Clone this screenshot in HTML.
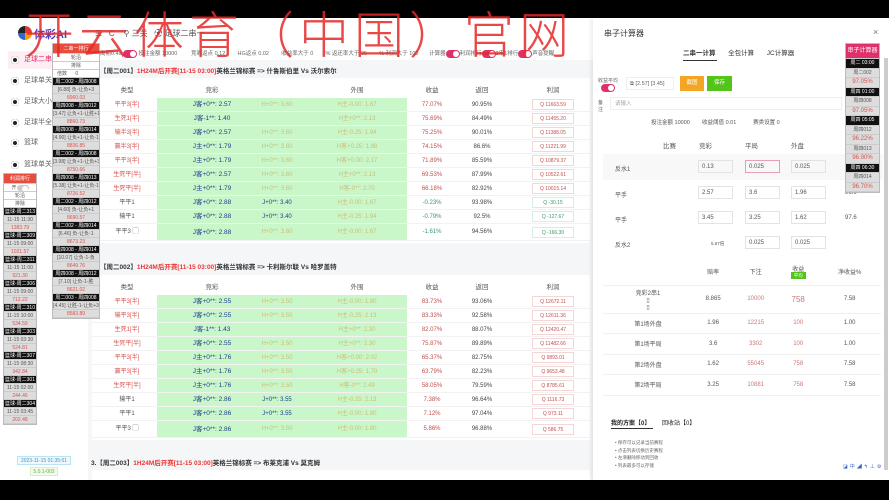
<!DOCTYPE html>
<html><head><meta charset="utf-8"><style>
*{box-sizing:border-box;margin:0;padding:0}
body{width:889px;height:500px;overflow:hidden;position:relative;background:#fff;font-family:"Liberation Sans","Noto Sans CJK SC",sans-serif;font-size:6px;color:#555}
.a{position:absolute}
.blk{background:#000}
.wm{position:absolute;left:24px;top:-4px;font-size:50px;color:rgba(228,40,40,.85);font-family:"Noto Sans CJK SC",sans-serif;font-weight:300;letter-spacing:5px;white-space:nowrap;z-index:50}
.menu div{position:absolute;left:8px;width:80px;height:18px;line-height:18px;padding-left:16px;font-size:7px;color:#666}
.menu div:before{content:"";position:absolute;left:3px;top:5px;width:8px;height:8px;border-radius:50%;background:#222;box-shadow:inset 0 0 0 2px #fff,inset 0 0 0 3px #222}
.tbl{position:absolute;left:92px;width:498px;background:#fff}
.row{position:absolute;left:0;width:498px;height:14px;line-height:14px;border-bottom:1px solid #f2f2f2}
.row span{position:absolute;text-align:center;white-space:nowrap}
.c1{left:10px;width:50px;color:#d9534f}
.c2{left:65px;width:110px;color:#1f3f8f;font-size:6.5px}
.c3{left:140px;width:90px;color:#c9c07a}
.c4{left:210px;width:110px;color:#c9c07a}
.c5{left:315px;width:50px;color:#c0504d}
.c6{left:365px;width:50px;color:#444}
.c7{left:440px;width:42px;border:1px solid #f3d6d6;height:11px;line-height:10px;top:1px;color:#c0504d;font-size:5px}
.grn{position:absolute;left:65px;width:250px;background:#c9f7c9}
.hd span{position:absolute;text-align:center;color:#555;font-size:6.5px}
.p1 div,.p2 div{height:8px;line-height:8px;text-align:center;font-size:5px;border-bottom:1px solid #ccc;white-space:nowrap;overflow:hidden}
.pk div{height:9.5px;line-height:9.5px}
.bk{background:#111;color:#fff}
.gy{background:#ddd;color:#555}
.rd{background:#ddd;color:#d9534f}
.tog{display:inline-block;width:14px;height:8px;border-radius:4px;background:#e0306a;position:relative;vertical-align:middle}
.tog:after{content:"";position:absolute;right:1px;top:1px;width:6px;height:6px;border-radius:50%;background:#fff}
.m td{border-bottom:1px solid #f0f0f0;text-align:center;color:#555;font-size:6px}
.inp{display:inline-block;border:1px solid #e3e3e3;height:13px;line-height:12px;padding-left:3px;text-align:left}
</style></head><body>
<div class="a blk" style="left:0;top:0;width:889px;height:18px"></div>
<div class="a blk" style="left:0;top:480px;width:889px;height:20px;z-index:60"></div>
<div class="wm">开云体育（中国）官网</div>

<div class="a" style="left:18px;top:26px;width:14px;height:14px;border-radius:50%;background:conic-gradient(#e33 0 25%,#f90 0 50%,#36c 0 75%,#222 0)"></div>
<div class="a" style="left:34px;top:26px;font-size:11px;font-weight:bold;color:#4a3cc9">体彩AI</div>
<div class="a" style="left:95px;top:28px;font-size:8px;color:#555">☰ &nbsp;&nbsp;C &nbsp;&nbsp;&nbsp;⚲ 三关 &nbsp; ⚽ 足球二串一</div>

<div class="menu">
<div style="top:51px;background:#fdeef3;color:#e0306a">足球二串一</div>
<div style="top:72px">足球单关</div>
<div style="top:93px">足球大小</div>
<div style="top:114px">足球半全场</div>
<div style="top:134px">篮球</div>
<div style="top:156px">篮球单关</div>
</div>

<div class="a" style="left:100px;top:49px;width:490px;font-size:5.5px;color:#666;white-space:nowrap">离期0.4s <span class="tog"></span> 投注金额 10000 &nbsp;&nbsp;&nbsp;&nbsp;&nbsp;&nbsp;&nbsp;&nbsp;竞彩返点 0.12 &nbsp;&nbsp;&nbsp;&nbsp;&nbsp;&nbsp;&nbsp;HG返点 0.02 &nbsp;&nbsp;&nbsp;&nbsp;&nbsp;&nbsp;&nbsp;收益率大于 0 &nbsp;&nbsp;&nbsp;&nbsp;&nbsp;&nbsp;&nbsp;% 返还率大于 95 &nbsp;&nbsp;&nbsp;&nbsp;&nbsp;&nbsp;&nbsp;% 利润大于 100 &nbsp;&nbsp;&nbsp;&nbsp;&nbsp;&nbsp;计算器<span class="tog"></span>利润排行<span class="tog"></span>2串1排行<span class="tog"></span>声音提醒</div>

<div class="a" style="left:88px;top:60px;width:505px;height:420px;background:#f5f6f8"></div>

<div class="a" style="left:100px;top:65px;font-size:6.5px;color:#333;font-weight:bold;white-space:nowrap">【周二001】<span style="color:#e33">1H24M后开赛[11-15 03:00]</span>英格兰锦标赛 =&gt; 什鲁斯伯里 Vs 沃尔索尔</div>
<div class="tbl" style="top:78px;height:165px">
<div class="hd" style="position:absolute;top:6px;width:100%"><span style="left:10px;width:50px">类型</span><span style="left:65px;width:110px">竞彩</span><span style="left:210px;width:110px">外围</span><span style="left:315px;width:50px">收益</span><span style="left:365px;width:50px">返回</span><span style="left:440px;width:42px">利润</span></div>
<div class="grn" style="top:20px;height:143px"></div>
<div class="row" style="top:20px"><span class="c1">平平3[半]</span><span class="c2">J客+0**: 2.57</span><span class="c3">H+0**: 3.60</span><span class="c4">H主-0.00: 1.67</span><span class="c5">77.07%</span><span class="c6">90.95%</span><span class="c7">Q 11663.59</span></div>
<div class="row" style="top:34px"><span class="c1">生死1[半]</span><span class="c2">J客-1**: 1.40</span><span class="c4">H主+0**: 2.13</span><span class="c5">75.69%</span><span class="c6">84.49%</span><span class="c7">Q 11455.20</span></div>
<div class="row" style="top:48px"><span class="c1">输半3[半]</span><span class="c2">J客+0**: 2.57</span><span class="c3">H+0**: 3.60</span><span class="c4">H主-0.25: 1.94</span><span class="c5">75.25%</span><span class="c6">90.01%</span><span class="c7">Q 11388.05</span></div>
<div class="row" style="top:62px"><span class="c1">赢半3[半]</span><span class="c2">J主+0**: 1.79</span><span class="c3">H+0**: 3.60</span><span class="c4">H客+0.25: 1.88</span><span class="c5">74.15%</span><span class="c6">86.6%</span><span class="c7">Q 11221.99</span></div>
<div class="row" style="top:76px"><span class="c1">平平3[半]</span><span class="c2">J主+0**: 1.79</span><span class="c3">H+0**: 3.60</span><span class="c4">H客+0.00: 2.17</span><span class="c5">71.89%</span><span class="c6">85.59%</span><span class="c7">Q 10879.37</span></div>
<div class="row" style="top:90px"><span class="c1">生死平[半]</span><span class="c2">J客+0**: 2.57</span><span class="c3">H+0**: 3.60</span><span class="c4">H主+0**: 2.13</span><span class="c5">69.53%</span><span class="c6">87.99%</span><span class="c7">Q 10522.61</span></div>
<div class="row" style="top:104px"><span class="c1">生死平[半]</span><span class="c2">J主+0**: 1.79</span><span class="c3">H+0**: 3.60</span><span class="c4">H客-0**: 2.70</span><span class="c5">66.18%</span><span class="c6">82.92%</span><span class="c7">Q 10015.14</span></div>
<div class="row" style="top:118px"><span class="c1" style="color:#555">平平1</span><span class="c2">J客+0**: 2.88</span><span class="c3" style="color:#1f3f8f">J+0**: 3.40</span><span class="c4">H主-0.00: 1.67</span><span class="c5" style="color:#3a9a6a">-0.23%</span><span class="c6">93.98%</span><span class="c7" style="color:#3a9a6a;border-color:#d6eedd">Q -30.15</span></div>
<div class="row" style="top:132px"><span class="c1" style="color:#555">输平1</span><span class="c2">J客+0**: 2.88</span><span class="c3" style="color:#1f3f8f">J+0**: 3.40</span><span class="c4">H主-0.25: 1.94</span><span class="c5" style="color:#3a9a6a">-0.79%</span><span class="c6">92.5%</span><span class="c7" style="color:#3a9a6a;border-color:#d6eedd">Q -127.67</span></div>
<div class="row" style="top:146px;height:17px;line-height:17px"><span class="c1" style="color:#555">平平3 ▢</span><span class="c2">J客+0**: 2.88</span><span class="c3">H+0**: 3.60</span><span class="c4">H主-0.00: 1.67</span><span class="c5" style="color:#3a9a6a">-1.61%</span><span class="c6">94.56%</span><span class="c7" style="color:#3a9a6a;border-color:#d6eedd;top:3px">Q -166.30</span></div>
</div>

<div class="a" style="left:100px;top:261px;font-size:6.5px;color:#333;font-weight:bold;white-space:nowrap">【周二002】<span style="color:#e33">1H24M后开赛[11-15 03:00]</span>英格兰锦标赛 =&gt; 卡利斯尔联 Vs 哈罗盖特</div>
<div class="tbl" style="top:275px;height:165px">
<div class="hd" style="position:absolute;top:6px;width:100%"><span style="left:10px;width:50px">类型</span><span style="left:65px;width:110px">竞彩</span><span style="left:210px;width:110px">外围</span><span style="left:315px;width:50px">收益</span><span style="left:365px;width:50px">返回</span><span style="left:440px;width:42px">利润</span></div>
<div class="grn" style="top:20px;height:143px"></div>
<div class="row" style="top:20px"><span class="c1">平平3[半]</span><span class="c2">J客+0**: 2.55</span><span class="c3">H+0**: 3.50</span><span class="c4">H主-0.00: 1.80</span><span class="c5">83.73%</span><span class="c6">93.06%</span><span class="c7">Q 12672.11</span></div>
<div class="row" style="top:34px"><span class="c1">输平3[半]</span><span class="c2">J客+0**: 2.55</span><span class="c3">H+0**: 3.50</span><span class="c4">H主-0.25: 2.13</span><span class="c5">83.33%</span><span class="c6">92.58%</span><span class="c7">Q 12611.36</span></div>
<div class="row" style="top:48px"><span class="c1">生死1[半]</span><span class="c2">J客-1**: 1.43</span><span class="c4">H主+0**: 2.30</span><span class="c5">82.07%</span><span class="c6">88.07%</span><span class="c7">Q 12420.47</span></div>
<div class="row" style="top:62px"><span class="c1">生死平[半]</span><span class="c2">J客+0**: 2.55</span><span class="c3">H+0**: 3.50</span><span class="c4">H主+0**: 2.30</span><span class="c5">75.87%</span><span class="c6">89.89%</span><span class="c7">Q 11482.66</span></div>
<div class="row" style="top:76px"><span class="c1">平平3[半]</span><span class="c2">J主+0**: 1.76</span><span class="c3">H+0**: 3.50</span><span class="c4">H客+0.00: 2.02</span><span class="c5">65.37%</span><span class="c6">82.75%</span><span class="c7">Q 9893.01</span></div>
<div class="row" style="top:90px"><span class="c1">赢平3[半]</span><span class="c2">J主+0**: 1.76</span><span class="c3">H+0**: 3.50</span><span class="c4">H客+0.25: 1.70</span><span class="c5">63.79%</span><span class="c6">82.23%</span><span class="c7">Q 9653.48</span></div>
<div class="row" style="top:104px"><span class="c1">生死平[半]</span><span class="c2">J主+0**: 1.76</span><span class="c3">H+0**: 3.50</span><span class="c4">H客-0**: 2.49</span><span class="c5">58.05%</span><span class="c6">79.59%</span><span class="c7">Q 8785.61</span></div>
<div class="row" style="top:118px"><span class="c1" style="color:#555">输平1</span><span class="c2">J客+0**: 2.86</span><span class="c3" style="color:#1f3f8f">J+0**: 3.55</span><span class="c4">H主-0.25: 2.13</span><span class="c5">7.38%</span><span class="c6">96.64%</span><span class="c7">Q 1116.73</span></div>
<div class="row" style="top:132px"><span class="c1" style="color:#555">平平1</span><span class="c2">J客+0**: 2.86</span><span class="c3" style="color:#1f3f8f">J+0**: 3.55</span><span class="c4">H主-0.00: 1.80</span><span class="c5">7.12%</span><span class="c6">97.04%</span><span class="c7">Q 973.11</span></div>
<div class="row" style="top:146px;height:17px;line-height:17px"><span class="c1" style="color:#555">平平3 ▢</span><span class="c2">J客+0**: 2.86</span><span class="c3">H+0**: 3.50</span><span class="c4">H主-0.00: 1.80</span><span class="c5">5.86%</span><span class="c6">96.88%</span><span class="c7" style="top:3px">Q 586.75</span></div>
</div>
<div class="a" style="left:91px;top:457px;font-size:6.5px;color:#333;font-weight:bold;white-space:nowrap">3.【周二003】<span style="color:#e33">1H24M后开赛[11-15 03:00]</span>英格兰锦标赛 =&gt; 布莱克浦 Vs 莫克姆</div>
<div class="a" style="left:92px;top:470px;width:498px;height:10px;background:#fff"></div>

<div class="a" style="left:17px;top:456px;width:54px;height:9px;border:1px solid #bde3f0;background:#eef8fc;color:#3a9ac9;font-size:5px;text-align:center;line-height:8px">2023-11-15 01:35:01</div>
<div class="a" style="left:30px;top:467px;width:28px;height:9px;border:1px solid #d6f0c6;background:#f2fbec;color:#6a4;font-size:5px;text-align:center;line-height:8px">5.0.1-003</div>

<div class="a p1" style="left:52px;top:43px;width:48px;border:1px solid #bbb;background:#fff;z-index:10">
<div style="background:#e74c3c;color:#fff;height:10px;line-height:10px">二串一排行</div>
<div>轮沿</div><div>排除</div><div style="text-align:left;padding-left:4px">倍数 &nbsp;&nbsp;&nbsp;&nbsp;&nbsp;0</div>
<div class="bk">周二002 - 周四008</div><div class="gy">[6.88] 负-让负+3</div><div class="rd">8960.03</div>
<div class="bk">周四008 - 周四012</div><div class="gy">[3.47] 让负+1-让胜+1</div><div class="rd">8860.73</div>
<div class="bk">周四008 - 周四014</div><div class="gy">[4.90] 让负+1-让负-1</div><div class="rd">8836.85</div>
<div class="bk">周二002 - 周四008</div><div class="gy">[3.98] 让负+1-让负+3</div><div class="rd">8750.66</div>
<div class="bk">周四008 - 周四013</div><div class="gy">[5.38] 让负+1-让负-1</div><div class="rd">8726.52</div>
<div class="bk">周二002 - 周四012</div><div class="gy">[4.60] 负-让负+1</div><div class="rd">8690.57</div>
<div class="bk">周二002 - 周四014</div><div class="gy">[6.46] 负-让负-1</div><div class="rd">8673.23</div>
<div class="bk">周四008 - 周四014</div><div class="gy">[10.07] 让负-1-负</div><div class="rd">8649.76</div>
<div class="bk">周四008 - 周四012</div><div class="gy">[7.10] 让负-1-胜</div><div class="rd">8621.02</div>
<div class="bk">周二003 - 周四008</div><div class="gy">[4.45] 让胜-1-让负+3</div><div class="rd">8583.89</div>
</div>

<div class="a p2" style="left:3px;top:173px;width:34px;border:1px solid #bbb;background:#fff;z-index:10">
<div style="background:#e74c3c;color:#fff;height:10px;line-height:10px">利润排行</div>
<div>开<span class="tog" style="height:6px;width:12px;background:#ccc"></span></div><div>轮沿</div><div>排除</div>
<div class="bk">篮球-周二313</div><div class="gy">11-15 11:30</div><div class="rd">1383.79</div>
<div class="bk">篮球-周二309</div><div class="gy">11-15 09:00</div><div class="rd">1021.57</div>
<div class="bk">篮球-周二311</div><div class="gy">11-15 11:00</div><div class="rd">921.30</div>
<div class="bk">篮球-周二306</div><div class="gy">11-15 09:00</div><div class="rd">712.22</div>
<div class="bk">篮球-周二310</div><div class="gy">11-15 10:00</div><div class="rd">534.59</div>
<div class="bk">篮球-周二303</div><div class="gy">11-15 03:30</div><div class="rd">524.81</div>
<div class="bk">篮球-周二307</div><div class="gy">11-15 08:30</div><div class="rd">342.84</div>
<div class="bk">篮球-周二301</div><div class="gy">11-15 02:00</div><div class="rd">244.46</div>
<div class="bk">篮球-周二304</div><div class="gy">11-15 03:45</div><div class="rd">202.48</div>
</div>

<div class="a" style="left:593px;top:18px;width:296px;height:462px;background:#fff;box-shadow:-2px 0 4px rgba(0,0,0,.08)">
<div class="a" style="left:11px;top:10px;font-size:8px;color:#333">串子计算器</div>
<div class="a" style="left:280px;top:9px;font-size:9px;color:#777">×</div>
<div class="a" style="left:90px;top:29px;font-size:6.5px;color:#333;white-space:nowrap"><b>二串一计算</b> &nbsp;&nbsp;&nbsp;&nbsp;&nbsp;&nbsp;全包计算 &nbsp;&nbsp;&nbsp;&nbsp;&nbsp;&nbsp;JC计算器</div>
<div class="a" style="left:90px;top:42px;width:34px;height:1px;background:#333"></div>
<div class="a" style="left:5px;top:59px;font-size:5px;color:#666">收益平均</div>
<div class="a" style="left:8px;top:66px"><span class="tog"></span></div>
<div class="a" style="left:33px;top:59px;width:48px;height:13px;border:1px solid #eee;font-size:5.5px;line-height:12px;padding-left:3px;color:#666">⧉ [2.57] [3.45]</div>
<div class="a" style="left:87px;top:58px;width:24px;height:15px;background:#f3a623;color:#fff;font-size:5.5px;text-align:center;line-height:15px">截图</div>
<div class="a" style="left:114px;top:58px;width:25px;height:15px;background:#52c41a;color:#fff;font-size:5.5px;text-align:center;line-height:15px">保存</div>
<div class="a" style="left:5px;top:82px;font-size:5px;color:#666;line-height:7px">备<br>注</div>
<div class="a" style="left:17px;top:79px;width:232px;height:13px;border:1px solid #eee;font-size:5.5px;color:#aaa;line-height:12px;padding-left:4px">请输入</div>
<div class="a" style="left:58px;top:100px;font-size:5.5px;color:#555;white-space:nowrap">投注金额 10000 &nbsp;&nbsp;&nbsp;&nbsp;&nbsp;&nbsp;&nbsp;收益阈值 0.01 &nbsp;&nbsp;&nbsp;&nbsp;&nbsp;&nbsp;&nbsp;&nbsp;&nbsp;&nbsp;赛类设置 0</div>
<div class="a" style="left:10px;top:116px;width:280px;height:140px;font-size:6px;color:#555">
<div class="a" style="left:60px;top:6px;font-size:6.5px">比赛</div><div class="a" style="left:96px;top:6px;font-size:6.5px">竞彩</div><div class="a" style="left:142px;top:6px;font-size:6.5px">平局</div><div class="a" style="left:188px;top:6px;font-size:6.5px">外盘</div>
<div class="a" style="left:0;top:20px;width:280px;height:26px;background:#f8f8f8"></div>
<div class="a" style="left:12px;top:30px">反水1</div><div class="a inp" style="left:95px;top:26px;width:35px">0.13</div><div class="a inp" style="left:142px;top:26px;width:35px;border-color:#e5a0b8">0.025</div><div class="a inp" style="left:188px;top:26px;width:35px">0.025</div>
<div class="a" style="left:12px;top:56px">平手</div><div class="a inp" style="left:95px;top:52px;width:35px">2.57</div><div class="a inp" style="left:142px;top:52px;width:35px">3.6</div><div class="a inp" style="left:188px;top:52px;width:35px">1.96</div><div class="a" style="left:242px;top:56px">96.6</div>
<div class="a" style="left:12px;top:81px">平手</div><div class="a inp" style="left:95px;top:77px;width:35px">3.45</div><div class="a inp" style="left:142px;top:77px;width:35px">3.25</div><div class="a inp" style="left:188px;top:77px;width:35px">1.62</div><div class="a" style="left:242px;top:81px">97.6</div>
<div class="a" style="left:12px;top:106px">反水2</div><div class="a" style="left:108px;top:107px;font-size:4.5px">5.67倍</div><div class="a inp" style="left:142px;top:102px;width:35px">0.025</div><div class="a inp" style="left:188px;top:102px;width:35px">0.025</div>
</div>
<table class="a m" style="left:10px;top:240px;width:278px;border-collapse:collapse">
<tr style="height:27px"><td style="width:90px"></td><td>赔率</td><td>下注</td><td>收益<br><span style="background:#52c41a;color:#fff;font-size:4.5px;padding:1px 3px">平均</span></td><td>净收益%</td></tr>
<tr style="height:28px"><td>竞彩2串1<br>▯<br>▯</td><td>8.865</td><td style="color:#c77">10000</td><td style="color:#c77;font-size:8px">758</td><td>7.58</td></tr>
<tr style="height:20px"><td>第1场外盘</td><td>1.96</td><td style="color:#c77">12215</td><td style="color:#c77">100</td><td>1.00</td></tr>
<tr style="height:21px"><td>第1场平局</td><td>3.6</td><td style="color:#c77">3302</td><td style="color:#c77">100</td><td>1.00</td></tr>
<tr style="height:20px"><td>第2场外盘</td><td>1.62</td><td style="color:#c77">55045</td><td style="color:#c77">758</td><td>7.58</td></tr>
<tr style="height:21px"><td>第2场平局</td><td>3.25</td><td style="color:#c77">10881</td><td style="color:#c77">758</td><td>7.58</td></tr>
</table>
<div class="a" style="left:18px;top:400px;font-size:6px;color:#222;white-space:nowrap"><b>我的方案【0】</b> &nbsp;&nbsp;&nbsp;&nbsp;&nbsp;&nbsp;回收站【0】</div>
<div class="a" style="left:18px;top:410px;width:42px;height:1px;background:#333"></div>
<div class="a" style="left:22px;top:421px;font-size:4.5px;color:#666;line-height:7.5px">• 保存可以记录当前赛程<br>• 点击列表切换历史赛程<br>• 左滑删除移动到回收<br>• 列表最多可以存储</div>
<div class="a" style="left:250px;top:445px;font-size:5px;color:#36c;letter-spacing:2px">◪中◢↰⊥⚙</div>
<div class="a" style="left:291px;top:40px;width:4px;height:412px;background:#ccc"></div>
</div>
<div class="a p1 pk" style="left:845px;top:43px;width:35px;border:1px solid #bbb;background:#fff;z-index:10">
<div style="background:#e0306a;color:#fff;height:15px;line-height:15px;font-size:6px">串子计算器</div>
<div class="bk">周二 03:00</div><div class="gy">周二002</div><div class="rd" style="font-size:6px">97.05%</div>
<div class="bk">周四 01:00</div><div class="gy">周四008</div><div class="rd" style="font-size:6px">97.05%</div>
<div class="bk">周四 05:05</div><div class="gy">周四012</div><div class="rd" style="font-size:6px">96.22%</div>
<div class="gy">周四013</div><div class="rd" style="font-size:6px">96.90%</div>
<div class="bk">周四 06:30</div><div class="gy">周四014</div><div class="rd" style="font-size:6px">96.70%</div>
</div>
</body></html>
